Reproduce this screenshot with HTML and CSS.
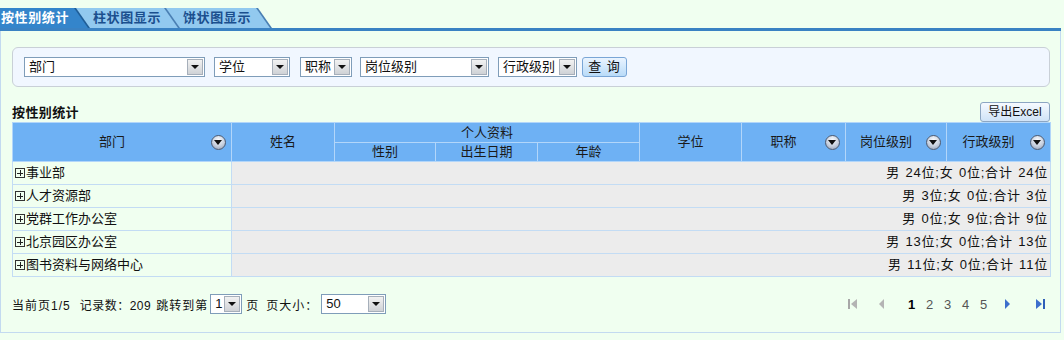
FILE: index.html
```html
<!DOCTYPE html>
<html lang="zh-CN">
<head>
<meta charset="utf-8">
<title>按性别统计</title>
<link rel="stylesheet" href="styles.css">
</head>
<body>
<div class="tabs">
  <div class="tab tab-active"><span class="tab-text">按性别统计</span></div>
  <div class="tab tab-2"><span class="tab-text">柱状图显示</span></div>
  <div class="tab tab-3"><span class="tab-text">饼状图显示</span></div>
</div>
<div class="tabline"></div>
<div class="panel">
  <div class="filter">
    <div class="sel w-dept"><span class="sel-text">部门</span><span class="sel-btn"></span></div>
    <div class="sel w-degree"><span class="sel-text">学位</span><span class="sel-btn"></span></div>
    <div class="sel w-title"><span class="sel-text">职称</span><span class="sel-btn"></span></div>
    <div class="sel w-post"><span class="sel-text">岗位级别</span><span class="sel-btn"></span></div>
    <div class="sel w-admin"><span class="sel-text">行政级别</span><span class="sel-btn"></span></div>
    <button class="btn btn-query">查 询</button>
  </div>

  <div class="title-row">
    <span class="title">按性别统计</span>
    <button class="btn btn-export">导出Excel</button>
  </div>

  <table class="grid">
    <colgroup>
      <col class="c1"><col class="c2"><col class="c3"><col class="c4"><col class="c5">
      <col class="c6"><col class="c7"><col class="c8"><col class="c9">
    </colgroup>
    <thead>
      <tr class="h1">
        <th rowspan="2"><div class="th-inner"><span class="th-label">部门</span><span class="sort"></span></div></th>
        <th rowspan="2">姓名</th>
        <th colspan="3">个人资料</th>
        <th rowspan="2">学位</th>
        <th rowspan="2"><div class="th-inner"><span class="th-label">职称</span><span class="sort"></span></div></th>
        <th rowspan="2"><div class="th-inner"><span class="th-label">岗位级别</span><span class="sort"></span></div></th>
        <th rowspan="2"><div class="th-inner"><span class="th-label">行政级别</span><span class="sort"></span></div></th>
      </tr>
      <tr class="h2">
        <th>性别</th><th>出生日期</th><th>年龄</th>
      </tr>
    </thead>
    <tbody>
      <tr><td class="dept"><span class="plus"></span>事业部</td><td colspan="8" class="sum">男 24位;女 0位;合计 24位</td></tr>
      <tr><td class="dept"><span class="plus"></span>人才资源部</td><td colspan="8" class="sum">男 3位;女 0位;合计 3位</td></tr>
      <tr><td class="dept"><span class="plus"></span>党群工作办公室</td><td colspan="8" class="sum">男 0位;女 9位;合计 9位</td></tr>
      <tr><td class="dept"><span class="plus"></span>北京园区办公室</td><td colspan="8" class="sum">男 13位;女 0位;合计 13位</td></tr>
      <tr><td class="dept"><span class="plus"></span>图书资料与网络中心</td><td colspan="8" class="sum">男 11位;女 0位;合计 11位</td></tr>
    </tbody>
  </table>

  <div class="footer">
    <div class="info">
      <span class="seg seg-page">当前页1/5</span>
      <span class="seg seg-count">记录数：209</span>
      <span class="seg seg-jump">跳转到第</span>
      <div class="sel sel-sm w-jump"><span class="sel-text">1</span><span class="sel-btn"></span></div>
      <span class="seg seg-ye">页</span>
      <span class="seg seg-size">页大小：</span>
      <div class="sel sel-sm w-size"><span class="sel-text">50</span><span class="sel-btn"></span></div>
    </div>
    <div class="pager">
      <svg class="pg-icon pg-first" width="10" height="12" viewBox="0 0 10 12"><rect x="0" y="1" width="2" height="10" fill="#a7a7a7"/><path d="M9 1 L3 6 L9 11 Z" fill="#b4b4b4"/></svg>
      <svg class="pg-icon pg-prev" width="7" height="12" viewBox="0 0 7 12"><path d="M6 1 L1 6 L6 11 Z" fill="#b4b4b4"/></svg>
      <span class="pg-num pg-cur">1</span>
      <span class="pg-num">2</span>
      <span class="pg-num">3</span>
      <span class="pg-num">4</span>
      <span class="pg-num pg-lastnum">5</span>
      <svg class="pg-icon pg-next" width="7" height="12" viewBox="0 0 7 12"><path d="M1 1 L6 6 L1 11 Z" fill="#3d6fcc"/></svg>
      <svg class="pg-icon pg-last" width="10" height="12" viewBox="0 0 10 12"><path d="M1 1 L7 6 L1 11 Z" fill="#3d6fcc"/><rect x="8" y="1" width="2" height="10" fill="#2f5fb8"/></svg>
    </div>
  </div>
</div>
</body>
</html>
```

FILE: styles.css
```css
* { box-sizing: border-box; }

html, body {
  margin: 0;
  padding: 0;
  background: #f0fff0;
}

body {
  font-family: "Liberation Sans", "Noto Sans CJK SC", sans-serif;
  font-size: 12px;
  color: #111;
  width: 1064px;
}

/* ---------- tabs ---------- */
.tabs {
  display: flex;
  height: 20px;
  margin-top: 8px;
}

.tab {
  position: relative;
  height: 20px;
  clip-path: polygon(0 0, calc(100% - 14px) 0, 100% 100%, 0 100%);
  background: #4a7fb3;
  font-size: 13px;
  font-weight: bold;
  line-height: 20px;
  white-space: nowrap;
}

.tab::before {
  content: "";
  position: absolute;
  top: 0;
  bottom: 0;
  left: 0;
  right: 2px;
  clip-path: polygon(0 0, calc(100% - 14px) 0, 100% 100%, 0 100%);
  background: #92c9ef;
}

.tab-text {
  position: relative;
  letter-spacing: 0.6px;
}

.tab-active {
  width: 90px;
  padding-left: 1px;
  z-index: 3;
  background: #1f5e98;
}
.tab-active::before { background: #3485cb; }
.tab-active .tab-text { color: #fff; }

.tab-2 {
  width: 104px;
  margin-left: -14px;
  padding-left: 17px;
  z-index: 2;
}
.tab-3 {
  width: 106px;
  margin-left: -14px;
  padding-left: 17px;
  z-index: 1;
}
.tab-2 .tab-text, .tab-3 .tab-text { color: #1b4f8e; }

.tabline {
  width: 1061px;
  height: 3px;
  background: #3a82c3;
}

/* ---------- panel ---------- */
.panel {
  width: 1061px;
  border: 1px solid #c3daf0;
  border-top: none;
  padding: 16px 10px 18px 11px;
}

.filter {
  display: flex;
  align-items: center;
  height: 40px;
  width: 1038px;
  border: 1px solid #c9d0d7;
  border-radius: 6px;
  background: #f1f7ff;
  padding-left: 11px;
}

.sel {
  display: flex;
  align-items: center;
  height: 20px;
  border: 1px solid #7f9db9;
  background: #fff;
  padding: 1px;
  margin-right: 9px;
}
.sel-text {
  flex: 1;
  padding-left: 3px;
  line-height: 16px;
  white-space: nowrap;
  font-size: 13px;
  letter-spacing: 0;
}
.sel-btn {
  position: relative;
  width: 16px;
  height: 16px;
  border: 1px solid #a6afba;
  background: linear-gradient(#f2f2f2, #cfd2d6);
}
.sel-btn::after {
  content: "";
  position: absolute;
  left: 3px;
  top: 5px;
  border-left: 4px solid transparent;
  border-right: 4px solid transparent;
  border-top: 4px solid #111;
}

.w-dept { width: 181px; }
.w-degree { width: 76px; margin-right: 10px; }
.w-title { width: 52px; margin-right: 8px; }
.w-post { width: 129px; }
.w-admin { width: 79px; margin-right: 5px; }

.btn {
  font-family: "Liberation Sans", "Noto Sans CJK SC", sans-serif;
  font-size: 12px;
  color: #111;
  padding: 0;
  cursor: pointer;
}

.btn-query {
  width: 45px;
  height: 20px;
  border: 1px solid #7aa6d6;
  border-radius: 3px;
  background: linear-gradient(#eaf4ff, #b9dbf8);
  font-size: 13px;
  letter-spacing: 1px;
  line-height: 18px;
}

/* ---------- title row ---------- */
.title-row {
  display: flex;
  align-items: center;
  justify-content: space-between;
  height: 21px;
  margin-top: 14px;
  width: 1038px;
}
.title {
  font-weight: bold;
  font-size: 13px;
  letter-spacing: 0.4px;
}
.btn-export {
  width: 70px;
  height: 20px;
  border: 1px solid #8ca6c2;
  border-radius: 3px;
  background: linear-gradient(#f6faff, #cfe3f7);
  line-height: 18px;
}

/* ---------- table ---------- */
.grid {
  width: 1038px;
  table-layout: fixed;
  border-collapse: collapse;
  border: 1px solid #a9cdf2;
}
.c1 { width: 219px; }
.c2 { width: 103px; }
.c3 { width: 101px; }
.c4 { width: 102px; }
.c5 { width: 102px; }
.c6 { width: 102px; }
.c7 { width: 104px; }
.c8 { width: 101px; }
.c9 { width: 104px; }

.grid th {
  background: #6eb1f4;
  border: 1px solid #b2d6fa;
  font-weight: normal;
  font-size: 13px;
  color: #1a1a1a;
  padding: 0;
  text-align: center;
  line-height: 16px;
}
.h1 th { height: 20px; }
.h2 th { height: 19px; }

.th-inner {
  display: flex;
  align-items: center;
  padding-right: 5px;
}
.th-label {
  flex: 1;
  text-align: center;
}

.sort {
  position: relative;
  width: 15px;
  height: 15px;
  border-radius: 50%;
  border: 1px solid #4b5a72;
  background: radial-gradient(circle at 50% 30%, #fafbfe 0%, #c7d0de 55%, #8e9bb3 100%);
}
.sort::after {
  content: "";
  position: absolute;
  left: 2px;
  top: 4px;
  border-left: 4.5px solid transparent;
  border-right: 4.5px solid transparent;
  border-top: 5px solid #111;
}

.grid td {
  height: 23px;
  border: 1px solid #c3dcf4;
  padding: 0;
  line-height: 16px;
  white-space: nowrap;
}
.dept {
  background: #f0fff0;
  padding-left: 2px !important;
  font-size: 13px;
}
.plus {
  display: inline-block;
  vertical-align: -1px;
  width: 10px;
  height: 10px;
  margin-right: 1px;
  border: 1px solid #333;
  background:
    linear-gradient(#222, #222) center / 6px 1px no-repeat,
    linear-gradient(#222, #222) center / 1px 6px no-repeat;
}
.sum {
  background: #ececec;
  text-align: right;
  padding-right: 2px !important;
  font-size: 13px;
  letter-spacing: 0.8px;
  word-spacing: 1px;
}

/* ---------- footer ---------- */
.footer {
  display: flex;
  align-items: center;
  justify-content: space-between;
  height: 20px;
  margin-top: 17px;
  width: 1038px;
}
.info {
  display: flex;
  align-items: center;
  font-size: 12px;
  letter-spacing: 1px;
}
.seg { white-space: nowrap; }
.seg-page { margin-right: 9px; }
.seg-count { margin-right: 5px; letter-spacing: 0.5px; }
.seg-jump { margin-right: 2px; }
.seg-ye { margin-left: 4px; margin-right: 7px; }
.seg-size { margin-right: 3px; }

.sel-sm { margin-right: 0; height: 20px; }
.w-jump { width: 32px; }
.w-size { width: 65px; }

.pager {
  display: flex;
  align-items: center;
  margin-right: 5px;
}
.pg-icon { display: block; }
.pg-first { margin-right: 20px; }
.pg-prev { margin-right: 23px; }
.pg-num {
  font-family: "Liberation Sans", sans-serif;
  font-size: 13px;
  color: #555;
  width: 18px;
  text-align: left;
}
.pg-cur { color: #000; font-weight: bold; }
.pg-lastnum { width: 24px; }
.pg-next { margin-right: 24px; }
```
